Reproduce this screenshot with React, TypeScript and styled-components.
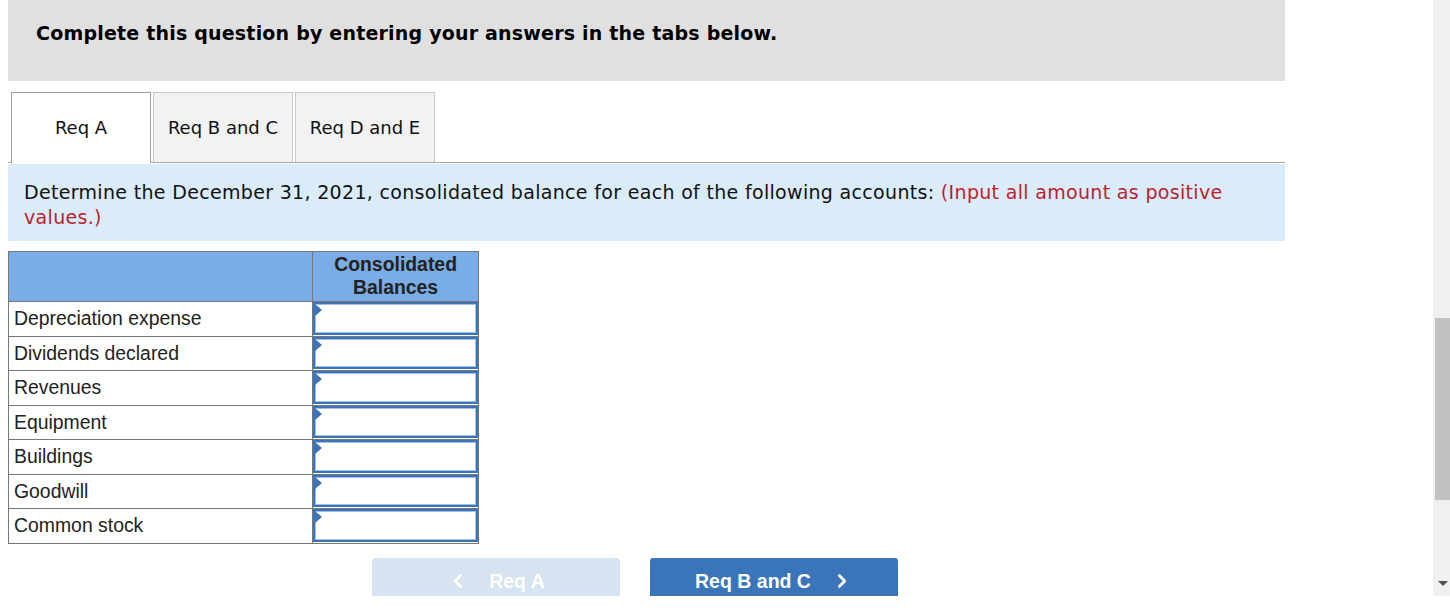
import React from "react";
import styled, { createGlobalStyle } from "styled-components";
import { ChevronLeft, ChevronRight } from "lucide-react";

const Global = createGlobalStyle`
  html, body { margin: 0; padding: 0; background: #fff; }
  body { font-family: "DejaVu Sans", Verdana, sans-serif; }
  * { box-sizing: border-box; }
`;

const Frame = styled.div`
  display: flex;
  width: 1450px;
  height: 596px;
  overflow: hidden;
`;

const Content = styled.div`
  flex: 1;
  padding: 0 148px 0 8px;
  overflow: hidden;
`;

const Header = styled.div`
  height: 81px;
  background: #e0e0e0;
  padding: 21px 0 0 28px;
  font-family: "DejaVu Sans", Verdana, sans-serif;
  font-weight: bold;
  font-size: 19px;
  letter-spacing: 0.2px;
  line-height: 24px;
  color: #000;
`;

const TabBar = styled.div`
  display: flex;
  align-items: flex-end;
  gap: 2px;
  margin-top: 11px;
  padding-left: 3px;
  border-bottom: 1px solid #a6a6a6;
`;

const Tab = styled.div<{ $active?: boolean }>`
  width: 140px;
  height: ${(p) => (p.$active ? "71px" : "70px")};
  margin-bottom: ${(p) => (p.$active ? "-1px" : "0")};
  display: flex;
  align-items: center;
  justify-content: center;
  padding-bottom: ${(p) => (p.$active ? "1px" : "0")};
  background: ${(p) => (p.$active ? "#fff" : "#f2f2f2")};
  border: 1px solid ${(p) => (p.$active ? "#a0a0a0" : "#c8c8c8")};
  border-bottom: ${(p) => (p.$active ? "none" : "0")};
  font-family: "DejaVu Sans", Verdana, sans-serif;
  font-size: 18px;
  color: #111;
`;

const Instruction = styled.div`
  margin-top: 1px;
  height: 77px;
  background: #daebf9;
  padding: 16px 40px 0 16px;
  font-family: "DejaVu Sans", Verdana, sans-serif;
  font-size: 19px;
  letter-spacing: 0.32px;
  line-height: 25px;
  color: #111;
`;

const Red = styled.span`
  color: #be1e2d;
`;

const Table = styled.table`
  margin-top: 10px;
  border-collapse: collapse;
  width: 471px;
  font-family: "Liberation Sans", Arial, sans-serif;
  font-size: 19.4px;
  color: #222;
`;

const HeadCell = styled.th`
  height: 50px;
  background: #7aace5;
  border: 1px solid #777;
  font-weight: bold;
  line-height: 23px;
  padding: 0 0 2px;
  text-align: center;
  vertical-align: middle;
`;

const LabelCell = styled.td`
  width: 305px;
  height: 34.5px;
  border: 1px solid #777;
  padding: 0 0 1px 5px;
  line-height: 22px;
  vertical-align: middle;
`;

const InputCell = styled.td`
  width: 166px;
  height: 34.5px;
  border: 1px solid #777;
  padding: 0;
  position: relative;
`;

const AmountInput = styled.div`
  position: absolute;
  inset: 0 0 1px 0;
  background: #fff;
  border: 2px solid #3b74b9;
  box-shadow: inset 0 0 0 1px #9fc0e8;
  &::before {
    content: "";
    position: absolute;
    left: 0;
    top: 0;
    border-style: solid;
    border-width: 6px 0 6px 7px;
    border-color: transparent transparent transparent #3b74b9;
  }
`;

const NavRow = styled.div`
  display: flex;
  gap: 30px;
  margin-top: 14px;
  padding-left: 364px;
`;

const NavButton = styled.div<{ $primary?: boolean }>`
  width: 248px;
  height: 46px;
  border-radius: 3px 3px 0 0;
  background: ${(p) => (p.$primary ? "#3a75ba" : "#d6e3f1")};
  color: #fff;
  display: flex;
  align-items: center;
  justify-content: center;
  gap: 20px;
  padding-top: 1px;
  font-family: "Liberation Sans", Arial, sans-serif;
  font-weight: bold;
  font-size: 19.5px;
`;

const ScrollTrack = styled.div`
  width: 17px;
  height: 596px;
  background: #f0f0f0;
  display: flex;
  flex-direction: column;
  align-items: flex-end;
  padding-top: 318px;
`;

const ScrollThumb = styled.div`
  width: 15px;
  height: 182px;
  background: #c1c1c1;
`;

const ScrollArrow = styled.div`
  margin-top: 81px;
  margin-right: 2px;
  width: 0;
  height: 0;
  border-style: solid;
  border-width: 5px 5px 0 5px;
  border-color: #505050 transparent transparent transparent;
`;

const rows = [
  "Depreciation expense",
  "Dividends declared",
  "Revenues",
  "Equipment",
  "Buildings",
  "Goodwill",
  "Common stock",
];

export default function App() {
  return (
    <>
      <Global />
      <Frame>
        <Content>
          <Header>Complete this question by entering your answers in the tabs below.</Header>
          <TabBar>
            <Tab $active>Req A</Tab>
            <Tab>Req B and C</Tab>
            <Tab>Req D and E</Tab>
          </TabBar>
          <Instruction>
            Determine the December 31, 2021, consolidated balance for each of the following accounts:{" "}
            <Red>(Input all amount as positive values.)</Red>
          </Instruction>
          <Table>
            <thead>
              <tr>
                <HeadCell />
                <HeadCell>
                  Consolidated
                  <br />
                  Balances
                </HeadCell>
              </tr>
            </thead>
            <tbody>
              {rows.map((r) => (
                <tr key={r}>
                  <LabelCell>{r}</LabelCell>
                  <InputCell>
                    <AmountInput />
                  </InputCell>
                </tr>
              ))}
            </tbody>
          </Table>
          <NavRow>
            <NavButton>
              <ChevronLeft size={22} strokeWidth={3} />
              <span>Req A</span>
            </NavButton>
            <NavButton $primary>
              <span>Req B and C</span>
              <ChevronRight size={22} strokeWidth={3} />
            </NavButton>
          </NavRow>
        </Content>
        <ScrollTrack>
          <ScrollThumb />
          <ScrollArrow />
        </ScrollTrack>
      </Frame>
    </>
  );
}
